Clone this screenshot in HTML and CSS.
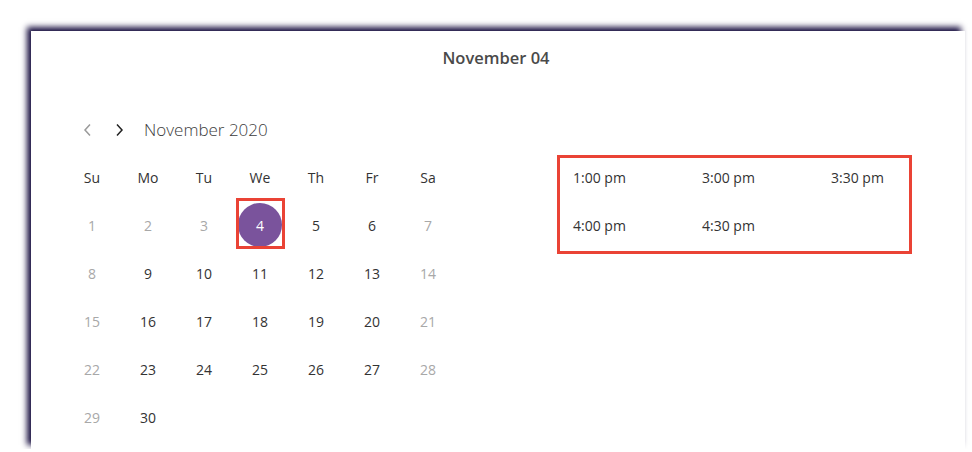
FILE: index.html
```html
<!DOCTYPE html>
<html lang="en">
<head>
    <meta charset="UTF-8">
    <title>Pick a time</title>
    <link rel="stylesheet" href="styles.css">
</head>
<body>
    <div class="panel">
        <div class="title">November 04</div>

        <div class="content">
            <div class="calendar">
                <div class="nav">
                    <button class="nav-btn prev" title="Previous month">
                        <svg width="10" height="14" viewBox="0 0 10 14"><polyline points="7,1.5 2,7 7,12.5" /></svg>
                    </button>
                    <button class="nav-btn next" title="Next month">
                        <svg width="10" height="14" viewBox="0 0 10 14"><polyline points="3,1.5 8,7 3,12.5" /></svg>
                    </button>
                    <span class="month">November 2020</span>
                </div>

                <div class="grid">
                    <div class="dow">Su</div>
                    <div class="dow">Mo</div>
                    <div class="dow">Tu</div>
                    <div class="dow">We</div>
                    <div class="dow">Th</div>
                    <div class="dow">Fr</div>
                    <div class="dow">Sa</div>

                    <div class="day off">1</div>
                    <div class="day off">2</div>
                    <div class="day off">3</div>
                    <div class="day selected"><span class="dot">4</span><span class="mark"></span></div>
                    <div class="day">5</div>
                    <div class="day">6</div>
                    <div class="day off">7</div>

                    <div class="day off">8</div>
                    <div class="day">9</div>
                    <div class="day">10</div>
                    <div class="day">11</div>
                    <div class="day">12</div>
                    <div class="day">13</div>
                    <div class="day off">14</div>

                    <div class="day off">15</div>
                    <div class="day">16</div>
                    <div class="day">17</div>
                    <div class="day">18</div>
                    <div class="day">19</div>
                    <div class="day">20</div>
                    <div class="day off">21</div>

                    <div class="day off">22</div>
                    <div class="day">23</div>
                    <div class="day">24</div>
                    <div class="day">25</div>
                    <div class="day">26</div>
                    <div class="day">27</div>
                    <div class="day off">28</div>

                    <div class="day off">29</div>
                    <div class="day">30</div>
                </div>
            </div>

            <div class="slots">
                <div class="slot">1:00 pm</div>
                <div class="slot">3:00 pm</div>
                <div class="slot">3:30 pm</div>
                <div class="slot">4:00 pm</div>
                <div class="slot">4:30 pm</div>
            </div>
        </div>
    </div>
</body>
</html>
```

FILE: styles.css
```css
* {
    margin: 0;
    padding: 0;
    box-sizing: border-box;
}

body {
    font-family: 'Open Sans', 'Noto Sans', sans-serif;
    background: #fff;
    color: #333;
    overflow: hidden;
}

.panel {
    margin: 31px 0 0 31px;
    width: 934px;
    height: 418px;
    background: #fff;
    box-shadow: -4px -4px 6px #170e3f;
}

.title {
    text-align: center;
    font-size: 16.5px;
    font-weight: 600;
    color: #4a4a4a;
    padding-top: 15px;
    height: 75px;
    padding-right: 4px;
}

.content {
    display: flex;
    align-items: flex-start;
    gap: 101px;
    padding-left: 33px;
}

.calendar {
    width: 392px;
}

.nav {
    display: flex;
    align-items: center;
    height: 47px;
    padding-left: 17px;
}

.nav-btn {
    background: none;
    border: none;
    width: 14px;
    height: 20px;
    display: flex;
    align-items: center;
    justify-content: center;
    margin-right: 17px;
}

.nav-btn.next {
    margin-right: 18px;
}

.nav-btn svg polyline {
    fill: none;
    stroke-width: 1.5;
}

.prev svg polyline {
    stroke: #9a9a9a;
}

.next svg polyline {
    stroke: #222;
}

.month {
    font-size: 17px;
    font-weight: 300;
    color: #3c3c3c;
}

.grid {
    display: grid;
    grid-template-columns: repeat(7, 56px);
    grid-auto-rows: 48px;
}

.dow,
.day {
    display: flex;
    align-items: center;
    justify-content: center;
    font-size: 14px;
    color: #333;
}

.day.off {
    color: #a8a8a8;
}

.day.selected {
    position: relative;
}

.dot {
    width: 44px;
    height: 44px;
    border-radius: 50%;
    background: #7a539c;
    color: #fff;
    display: flex;
    align-items: center;
    justify-content: center;
}

.mark {
    position: absolute;
    left: 4px;
    top: -3px;
    width: 49px;
    height: 51px;
    border: 3px solid #ea4335;
}

.slots {
    margin-top: 49px;
    width: 355px;
    border: 3px solid #ea4335;
    padding: 0 0 5px 13px;
    display: grid;
    grid-template-columns: repeat(3, 129px);
    grid-auto-rows: 40px;
    row-gap: 8px;
}

.slot {
    display: flex;
    align-items: center;
    padding-bottom: 2px;
    font-size: 14px;
    color: #333;
}
```
